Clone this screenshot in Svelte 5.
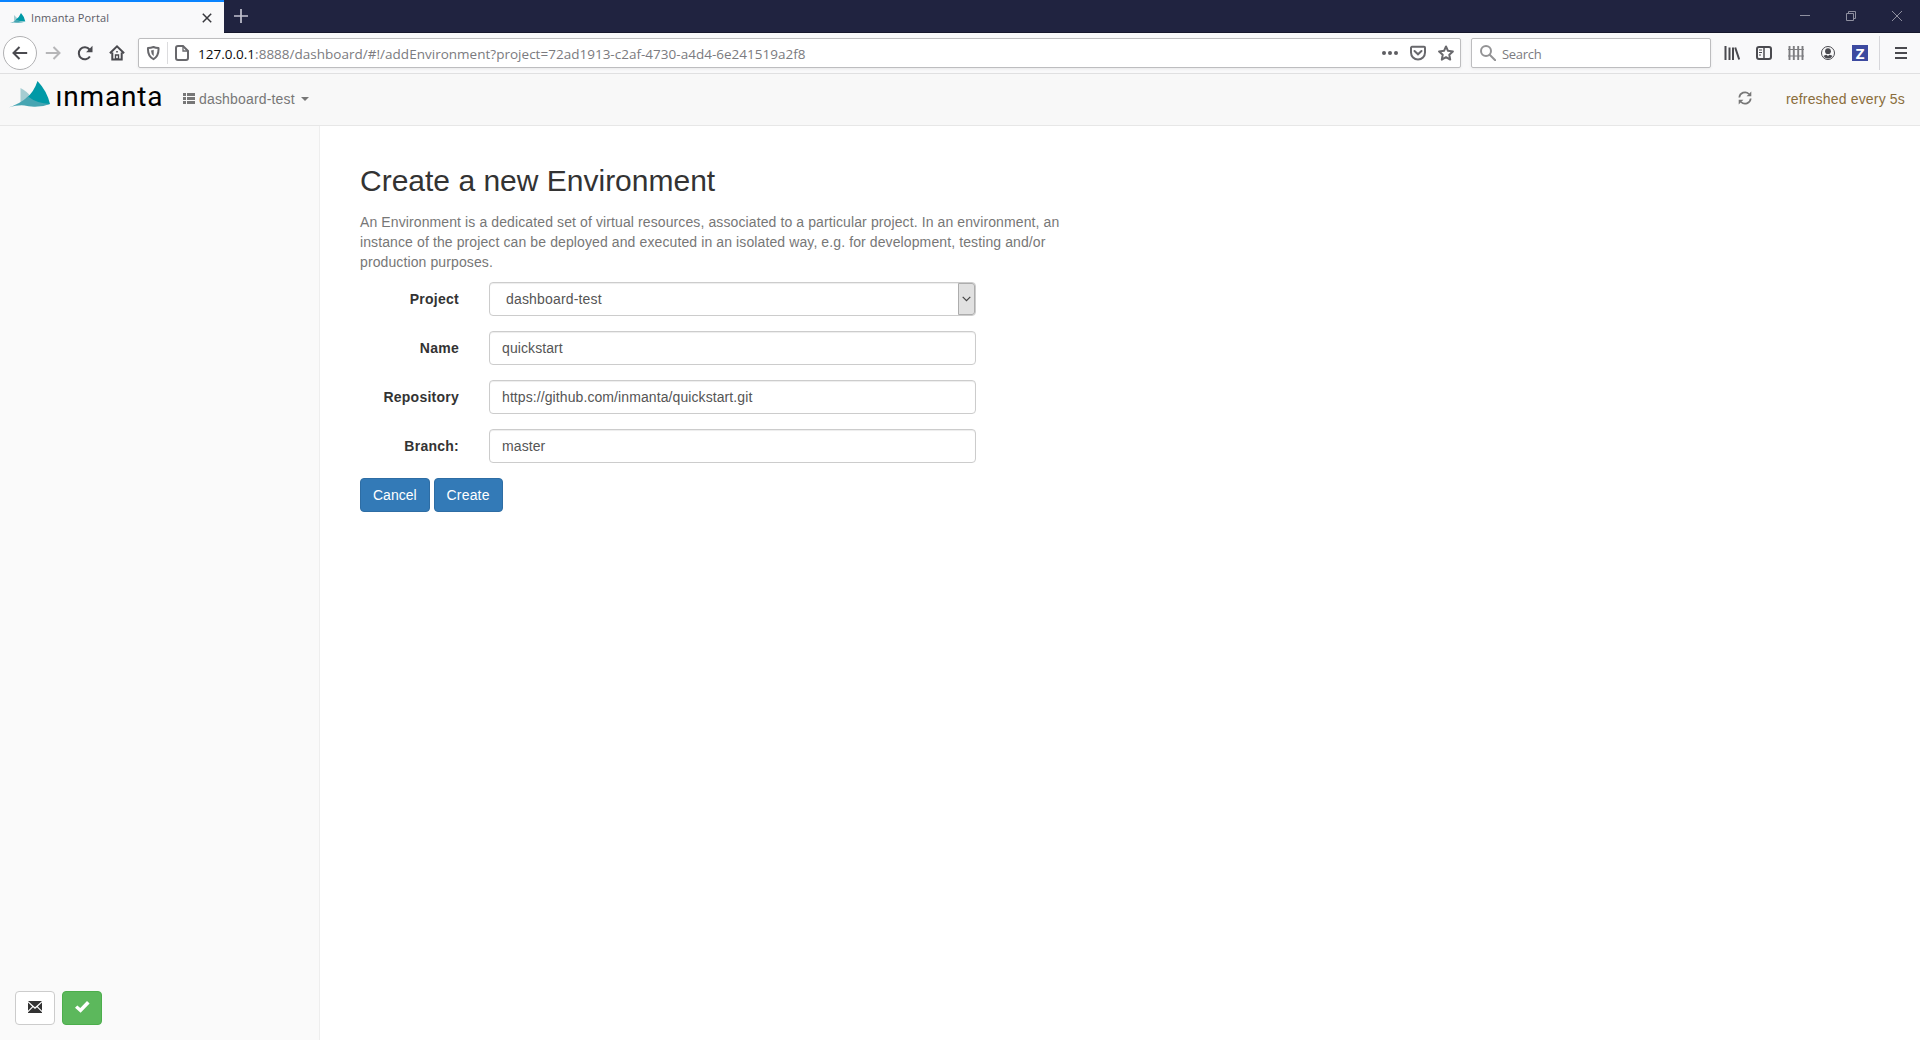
<script>
  const fields = [
    { id: 'name', label: 'Name', value: 'quickstart' },
    { id: 'repository', label: 'Repository', value: 'https://github.com/inmanta/quickstart.git' },
    { id: 'branch', label: 'Branch:', value: 'master' }
  ];
</script>

<div class="window">
  <header class="tabs">
    <div class="tab">
      <svg class="favicon" width="16" height="16" viewBox="0 0 16 16">
        <path d="M4 6v6l5-1z" fill="#a5cdd2" />
        <path d="M11 4Q14 7 15.300 12.600L5 11.500Q9 9 11 4z" fill="#0099a6" />
        <path d="M0 14Q4 13 6 11q4 2 9 1.800-5 1.500-9 .9-3-.5-6 .300z" fill="#46a5b2" />
      </svg>
      <span class="tab-title">Inmanta Portal</span>
      <svg class="tab-close" width="10" height="10" viewBox="0 0 10 10"><path d="M.8.8l8.400 8.400M9.200.8.8 9.200" stroke="#38383d" stroke-width="1.500" /></svg>
    </div>
    <svg class="new-tab" width="14" height="14" viewBox="0 0 14 14"><path d="M7 0v14M0 7h14" stroke="#c2c2cf" stroke-width="1.700" /></svg>
    <div class="controls">
      <svg width="10" height="10" viewBox="0 0 10 10"><path d="M0 4.500h10" /></svg>
      <svg width="10" height="10" viewBox="0 0 10 10"><path d="M.5 2.500h7v7h-7zM2.500 2.500v-2h7v7h-2" /></svg>
      <svg width="10" height="10" viewBox="0 0 10 10"><path d="M0 0l10 10M10 0 0 10" /></svg>
    </div>
  </header>

  <div class="toolbar">
    <span class="back">
      <svg width="16" height="16" viewBox="0 0 16 16" class="line"><path d="M15.200 8H1.500M7.500 2 1.500 8l6 6" /></svg>
    </span>
    <svg width="16" height="16" viewBox="0 0 16 16" class="line faded forward"><path d="M.8 8h13.700M8.500 2l6 6-6 6" /></svg>
    <svg width="16" height="16" viewBox="0 0 16 16" class="line reload"><path d="M12.900 11.500A6 6 0 1 1 12.500 4.500" /><path d="M15.500.8v6.400H9.100z" fill="#4a4a4f" stroke="none" /></svg>
    <svg width="16" height="16" viewBox="0 0 16 16" class="line home"><path d="M.9 8.200 8 1.400l7.100 6.800M3.300 7.500v7h9.400v-7" /><path d="M6.500 14v-4h3v4z" stroke-width="1.400" /><path d="M7.200 6h1.600v1.600H7.200z" fill="#4a4a4f" stroke="none" /></svg>

    <div class="urlbar">
      <svg width="14" height="16" viewBox="0 0 14 16" class="soft shield"><path d="M2 3Q5 3 7.500 2q2 1 5 1 .5 8-5 11.200Q1.500 11 2 3z" stroke-linejoin="round" /><path d="M7.700 4.800Q6.400 5.400 5 5.500q.1 4 2.700 5.700z" fill="#68686c" stroke="none" /></svg>
      <i class="divider"></i>
      <svg width="14" height="16" viewBox="0 0 14 16" class="soft page"><path d="M3 1h5l5 5v7a2 2 0 0 1-2 2H3a2 2 0 0 1-2-2V3a2 2 0 0 1 2-2z" /><path d="M8 1v5h5" stroke-width="1.300" /></svg>
      <span class="url"><b>127.0.0.1</b>:8888/dashboard/#!/addEnvironment?project=72ad1913-c2af-4730-a4d4-6e241519a2f8</span>
      <div class="url-actions">
        <svg width="16" height="16" viewBox="0 0 16 16" fill="#5e5e62"><circle cx="2" cy="8" r="2" /><circle cx="8" cy="8" r="2" /><circle cx="14" cy="8" r="2" /></svg>
        <svg width="16" height="16" viewBox="0 0 16 16" class="soft"><path d="M2 1.800h12a1 1 0 0 1 1 1v4.700a7 7 0 0 1-14 0V2.800a1 1 0 0 1 1-1z" /><path d="M4.500 6 8 9.300 11.500 6" stroke-linecap="round" /></svg>
        <svg width="16" height="16" viewBox="0 0 16 16" class="soft"><path d="m8 1.500 2 4.300 4.900.6-3.600 3.300.9 4.900L8 12.200l-4.200 2.400.9-4.900L1.100 6.400 6 5.800z" stroke-linejoin="round" /></svg>
      </div>
    </div>

    <div class="search">
      <svg width="16" height="16" viewBox="0 0 16 16" fill="none" stroke="#939395" stroke-width="2"><circle cx="6" cy="6" r="5" /><path d="m9.700 9.700 5.500 5.500" stroke-linecap="round" /></svg>
      <span>Search</span>
    </div>

    <div class="extensions">
      <svg width="16" height="16" viewBox="0 0 16 16" class="line"><path d="M1.500 1v14M5.500 2.500V15M9 2.500V15M11.200 2.500l4 12" /></svg>
      <svg width="16" height="16" viewBox="0 0 16 16" class="line"><rect x="1" y="2" width="14" height="12" rx="2" /><path d="M8 2v12" stroke-width="1.500" /><path d="M3 5h3M3 7.500h3M3 10h2" stroke-width="1" /></svg>
      <svg width="16" height="16" viewBox="0 0 16 16" fill="none" stroke="#7d7d80" stroke-width="1.900"><path d="M1.500 1v14M5.800 1v14M10.200 1v14M14.500 1v14" /><path d="M0 4.500h16M0 11h16" stroke-width="1.200" /></svg>
      <svg width="16" height="16" viewBox="0 0 16 16"><circle cx="8" cy="8" r="6.500" fill="none" stroke="#4a4a4f" /><circle cx="8" cy="6.200" r="2.900" fill="#4a4a4f" /><path d="M3.500 11q1-1 3-1.200L8 11l1.500-1.200q2 .2 3 1.200-1.700 2.500-4.500 2.500T3.500 11z" fill="#4a4a4f" /></svg>
      <span class="z">Z</span>
    </div>
    <div class="menu"><svg width="12" height="12" viewBox="0 0 12 12"><path d="M0 1h12M0 6h12M0 11h12" stroke="#4a4a4f" stroke-width="2" /></svg></div>
  </div>

  <nav class="navbar">
    <svg class="logo" width="156" height="40" viewBox="0 -4 156 40">
      <path d="M12.500 8v15L24 17.500Q18.500 11 12.500 8z" fill="#a5cdd2" />
      <path d="M29.500 1Q39 11 42 24L32 25.500 18 18.500Q26 12 29.500 1z" fill="#0099a6" />
      <path d="M0 27.500Q12 24 20 16.500q9 7 22 7.500-7 3-16 2.800-6-.2-9.500-1.300-6-.8-16.500 2z" fill="#46a5b2" />
      <text x="47.500" y="25.500" textLength="107" lengthAdjust="spacing">ınmanta</text>
    </svg>
    <div class="project-menu">
      <svg width="12" height="11" viewBox="0 0 12 11" fill="#777"><path d="M0 0h3v3H0zM4 0h8v3H4zM0 4h3v3H0zM4 4h8v3H4zM0 8h3v3H0zM4 8h8v3H4z" /></svg>
      <span>dashboard-test</span>
      <i class="caret"></i>
    </div>
    <div class="refresh">
      <svg width="14" height="14" viewBox="0 0 14 14"><path d="M1.300 6.500A5.700 5.700 0 0 1 11 3M12.700 7.500A5.700 5.700 0 0 1 3 11" fill="none" stroke="#777" stroke-width="1.700" /><path d="M13.300.5v4.700H8.600zM.7 13.500V8.800h4.700z" fill="#777" /></svg>
      <span>refreshed every 5s</span>
    </div>
  </nav>

  <div class="body">
    <aside>
      <button class="mail" aria-label="Messages">
        <svg width="14" height="12" viewBox="0 0 14 12"><path d="M0 0h14L7 6.200zM0 1.600 4.200 5.500 0 9.800zM14 1.600 9.800 5.500 14 9.800zM0 12v-.7L5 6.300l2 1.800 2-1.800 5 5V12z" fill="#333" /></svg>
      </button>
      <button class="ok" aria-label="Status">
        <svg width="15" height="12" viewBox="0 0 15 12"><path d="m0 6.700 2.300-2.300 3 2.500L12 0l2.600 2.400-9 9.400z" fill="#fff" /></svg>
      </button>
    </aside>
    <main>
      <h2>Create a new Environment</h2>
      <p>An Environment is a dedicated set of virtual resources, associated to a particular project. In an environment, an instance of the project can be deployed and executed in an isolated way, e.g. for development, testing and/or production purposes.</p>
      <div class="row">
        <span class="label">Project</span>
        <div class="control select">
          <span>dashboard-test</span>
          <i><svg width="9" height="6" viewBox="0 0 9 6"><path d="m.7.8 3.800 3.800L8.300.8" fill="none" stroke="#444" stroke-width="1.200" /></svg></i>
        </div>
      </div>
      {#each fields as field (field.id)}
        <div class="row">
          <label class="label" for={field.id}>{field.label}</label>
          <input class="control" id={field.id} value={field.value} spellcheck="false" />
        </div>
      {/each}
      <div class="buttons">
        <button>Cancel</button>
        <button class="create">Create</button>
      </div>
    </main>
  </div>
</div>

<style>
  :global(body) { margin: 0; background: #fff; }
  * { box-sizing: border-box; }
  .window { display: flex; flex-direction: column; height: 1040px; overflow: hidden; font: 14px/20px "Liberation Sans", Arial, sans-serif; color: #333; }
  svg { display: block; flex: none; }

  .tabs { display: flex; height: 33px; background: #202340; box-shadow: inset 0 -1px #15172c; }
  .tab { display: flex; align-items: center; width: 224px; padding: 2px 12px 0 10px; background: #f9f9fa; border-top: 2px solid #0a84ff; }
  .favicon { margin-top: -4px; }
  .tab-title { flex: 1; margin: -1px 0 0 5px; font: 11px/16px "Open Sans", sans-serif; letter-spacing: 0.130px; color: #5c5c66; white-space: nowrap; }
  .tab-close { margin-top: -1px; }
  .new-tab { margin: 9px 0 0 10px; }
  .controls { display: flex; gap: 36px; margin: 11px 18px 0 auto; fill: none; stroke: #8f90a0; }

  .toolbar { display: flex; align-items: center; height: 41px; padding-left: 3px; background: #f9f9fa; border-bottom: 1px solid #e0e0e1; }
  .line { fill: none; stroke: #4a4a4f; stroke-width: 2; }
  .faded { stroke: #b6b6b8; }
  .soft { fill: none; stroke: #68686c; stroke-width: 2; }
  .back { display: flex; align-items: center; justify-content: center; width: 34px; height: 34px; border: 1px solid #b1b1b3; border-radius: 50%; background: #fff; }
  .forward { margin-left: 8px; }
  .reload { margin-left: 16px; }
  .home { margin-left: 16px; }
  .urlbar, .search { display: flex; align-items: center; height: 30px; background: #fff; border: 1px solid #bdbdbf; border-radius: 2px; box-shadow: 0 1px 3px #0001; font: 13.500px/20px "Open Sans", sans-serif; color: #7b7b80; white-space: nowrap; }
  .urlbar { width: 1323px; margin-left: 13px; padding: 0 6px 0 7px; }
  .divider { width: 1px; height: 22px; margin: 0 7px; background: #dcdcde; }
  .url { margin-left: 9px; padding-top: 1px; letter-spacing: 0.015px; }
  .url b { font-weight: 400; color: #0c0c0d; }
  .url-actions { display: flex; gap: 12px; margin-left: auto; }
  .search { width: 240px; margin-left: 10px; padding-left: 8px; gap: 6px; font-size: 13px; letter-spacing: -0.300px; }
  .search span { padding-top: 1px; }
  .extensions { display: flex; align-items: center; gap: 16px; margin-left: 13px; }
  .z { width: 16px; height: 16px; background: #3d4aa0; color: #fff; font: 700 15px/16px "Open Sans", sans-serif; text-align: center; }
  .menu { display: flex; align-items: center; height: 34px; margin-left: 11px; padding-left: 15px; border-left: 1px solid #d7d7db; }

  .navbar { display: flex; align-items: center; height: 52px; padding-bottom: 2px; background: #f8f8f8; border-bottom: 1px solid #e7e7e7; color: #777; letter-spacing: 0.170px; }
  .logo { margin: -5px 0 0 8px; }
  .logo text { font: 28px "Roboto", sans-serif; letter-spacing: 0; fill: #000; }
  .project-menu { display: flex; align-items: center; margin-left: 19px; }
  .project-menu span { margin-left: 4px; }
  .caret { margin: 1px 0 0 6px; border: 4px solid transparent; border-top-color: #777; border-bottom: 0; }
  .refresh { display: flex; align-items: center; gap: 34px; margin: 0 15px 0 auto; color: #8a6d3b; }
  .refresh svg { margin-top: -2px; }

  .body { display: flex; flex: 1; min-height: 0; }
  aside { display: flex; align-items: flex-end; gap: 7px; width: 320px; padding: 0 0 15px 15px; background: #fafafa; border-right: 1px solid #eee; }
  aside button { display: flex; align-items: center; justify-content: center; width: 40px; height: 34px; padding: 0 0 2px; border: 1px solid #ccc; border-radius: 4px; background: #fff; }
  aside .ok { background: #5cb85c; border-color: #4cae4c; }

  main { padding: 38px 40px; }
  h2 { margin: 0; font-size: 30px; font-weight: 500; line-height: 33px; }
  p { width: 710px; margin: 15px 0 10px; color: #777; letter-spacing: 0.108px; }
  .row { display: flex; margin-bottom: 15px; }
  .label { width: 99px; margin-right: 30px; padding-top: 7px; text-align: right; font-weight: 700; letter-spacing: 0.250px; }
  .control { width: 487px; height: 34px; padding: 6px 12px; border: 1px solid #ccc; border-radius: 4px; background: #fff; box-shadow: inset 0 1px 1px rgba(0, 0, 0, 0.075); font: inherit; letter-spacing: 0.090px; color: #555; outline: 0; }
  .select { display: flex; justify-content: space-between; padding: 0 0 0 16px; line-height: 32px; letter-spacing: 0.170px; }
  .select i { display: flex; align-items: center; justify-content: center; width: 17px; border: 1px solid #adadad; background: #e1e1e1; border-radius: 0 3px 3px 0; }
  .buttons { display: flex; gap: 4px; }
  .buttons button { height: 34px; padding: 0 12px; border: 1px solid #2e6da4; border-radius: 4px; background: #337ab7; color: #fff; font: inherit; }
  .buttons .create { letter-spacing: 0.170px; }
</style>
